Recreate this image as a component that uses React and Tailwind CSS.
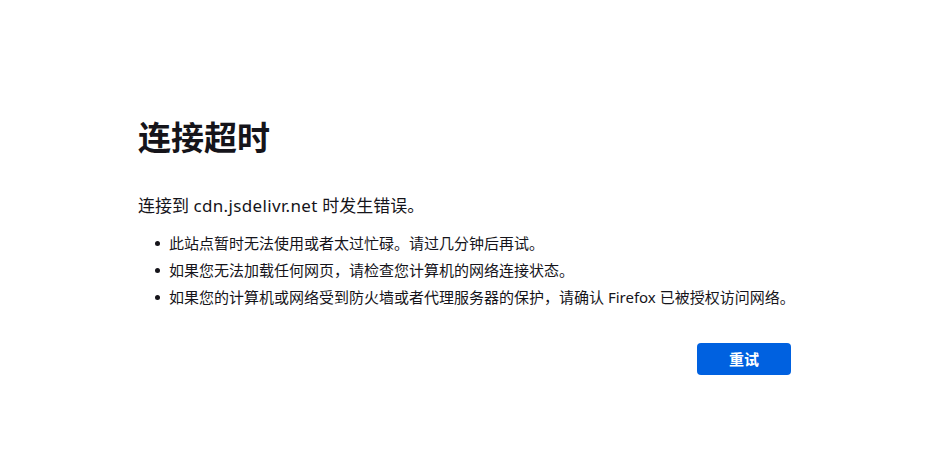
export default function App() {
  const items = [
    "此站点暂时无法使用或者太过忙碌。请过几分钟后再试。",
    "如果您无法加载任何网页，请检查您计算机的网络连接状态。",
    "如果您的计算机或网络受到防火墙或者代理服务器的保护，请确认 Firefox 已被授权访问网络。",
  ];
  return (
    <div
      lang="zh-CN"
      className="min-h-[457px] w-full bg-white text-[#15141a] pt-[118px] pl-[138px]"
      style={{ fontFamily: '"Noto Sans", "Noto Sans CJK SC", sans-serif' }}
    >
      <div className="w-[653px] flex flex-col">
        <h1 className="text-[33px] font-bold leading-[40px]">连接超时</h1>
        <p className="mt-[36px] text-[17px] leading-[24px]">
          连接到 <span className="tracking-[0.35px]">cdn.jsdelivr.net</span> 时发生错误。
        </p>
        <ul className="mt-[12px] flex flex-col">
          {items.map((t) => (
            <li key={t} className="flex items-center whitespace-nowrap text-[15px] leading-[27px]">
              <span className="w-[31px] shrink-0 flex justify-end pr-[9px]">
                <span className="block w-[5px] h-[5px] rounded-full bg-[#15141a]" />
              </span>
              <span>{t}</span>
            </li>
          ))}
        </ul>
        <div className="mt-[32px] flex justify-end">
          <button className="w-[94px] h-[32px] rounded-[4px] bg-[#0061e0] text-white text-[15px] font-bold">
            重试
          </button>
        </div>
      </div>
    </div>
  );
}
